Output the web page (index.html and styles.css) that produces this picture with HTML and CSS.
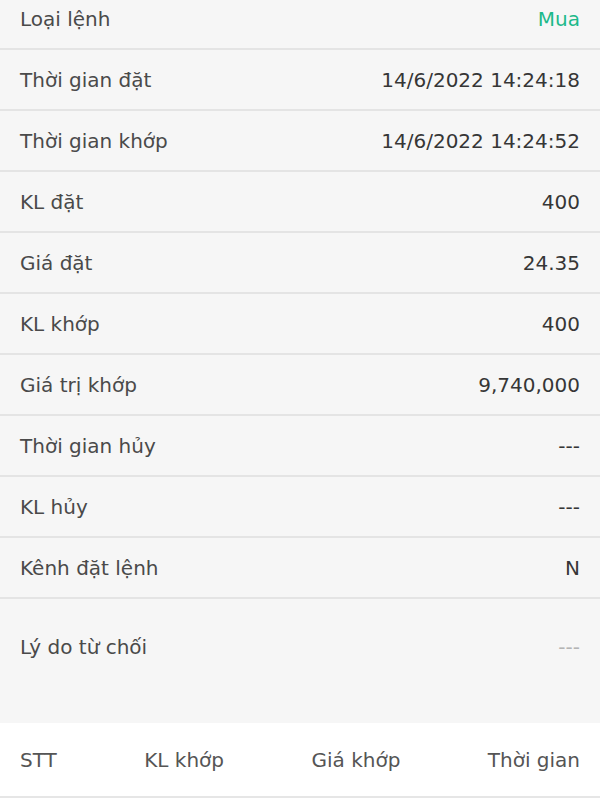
FILE: index.html
```html
<!DOCTYPE html>
<html lang="vi">
<head>
  <meta charset="UTF-8">
  <title>Chi tiết lệnh</title>
  <link rel="stylesheet" href="styles.css">
</head>
<body>

  <div class="detail">
    <div class="row"><span class="label">Loại lệnh</span><span class="value buy">Mua</span></div>
    <div class="row"><span class="label">Thời gian đặt</span><span class="value">14/6/2022 14:24:18</span></div>
    <div class="row"><span class="label">Thời gian khớp</span><span class="value">14/6/2022 14:24:52</span></div>
    <div class="row"><span class="label">KL đặt</span><span class="value">400</span></div>
    <div class="row"><span class="label">Giá đặt</span><span class="value">24.35</span></div>
    <div class="row"><span class="label">KL khớp</span><span class="value">400</span></div>
    <div class="row"><span class="label">Giá trị khớp</span><span class="value">9,740,000</span></div>
    <div class="row"><span class="label">Thời gian hủy</span><span class="value">---</span></div>
    <div class="row"><span class="label">KL hủy</span><span class="value">---</span></div>
    <div class="row"><span class="label">Kênh đặt lệnh</span><span class="value">N</span></div>
    <div class="row last"><span class="label">Lý do từ chối</span><span class="value muted">---</span></div>
  </div>

  <div class="match-head">
    <span>STT</span>
    <span>KL khớp</span>
    <span>Giá khớp</span>
    <span>Thời gian</span>
  </div>

</body>
</html>
```

FILE: styles.css
```css
body {
  margin: 0;
  background: #fff;
  font-family: "DejaVu Sans", sans-serif;
  font-size: 20px;
  color: #4a4a4a;
  overflow: hidden;
}
.detail {
  background: #f6f6f6;
  margin-top: -11px;
  padding-bottom: 29px;
}
.row {
  display: flex;
  justify-content: space-between;
  align-items: center;
  height: 59px;
  padding: 0 20px;
  border-bottom: 2px solid #e4e4e4;
}
.row.last {
  border-bottom: none;
  height: 95px;
}
.value {
  color: #363636;
}
.buy {
  color: #1db98a;
}
.muted {
  color: #b4b4b4;
}
.match-head {
  display: flex;
  justify-content: space-between;
  align-items: center;
  height: 73px;
  padding: 0 20px;
  border-bottom: 2px solid #e6e6e6;
  color: #555;
}
```
